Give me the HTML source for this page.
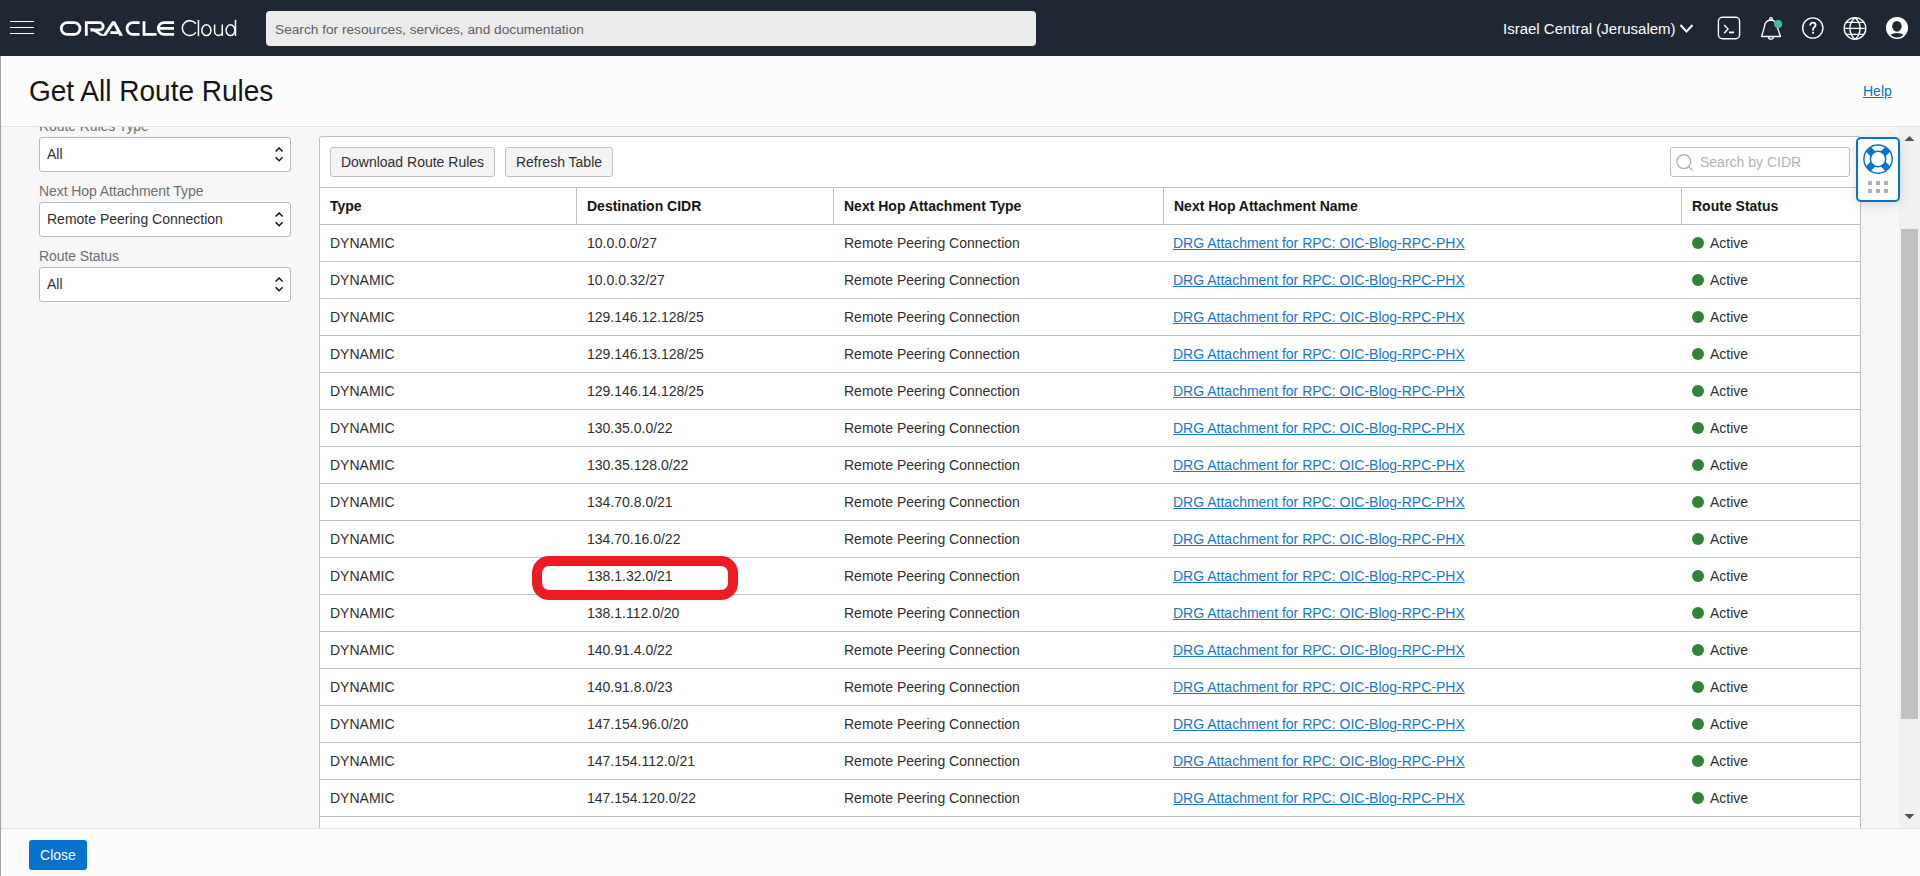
<!DOCTYPE html>
<html><head><meta charset="utf-8">
<style>
*{box-sizing:border-box;margin:0;padding:0}
html,body{width:1920px;height:876px;overflow:hidden}
body{position:relative;background:#f7f7f7;font-family:"Liberation Sans",sans-serif;font-size:14px;color:#161513}
.a{position:absolute;white-space:nowrap}
#hdr{left:0;top:0;width:1920px;height:56px;background:#1e2733}
#search{left:266px;top:11px;width:770px;height:35px;background:#ebebeb;border-radius:4px}
#search span{position:absolute;left:9px;top:10.5px;font-size:13.7px;line-height:16px;color:#5f5f5f}
#region{left:1503px;top:20px;font-size:15px;line-height:17px;color:#fff;transform:scaleY(1.03);transform-origin:0 13.7px}
#titlebar{left:1px;top:56px;width:1919px;height:71px;background:#fcfcfc;border-bottom:1px solid #e4e4e4}
#title{left:29px;top:76px;font-size:28px;line-height:32px;color:#161513;transform:scaleY(1.05);transform-origin:0 25px}
#help{left:1863px;top:83px;font-size:14px;line-height:16px;color:#0572ce;text-decoration:underline}
#leftline{left:0;top:56px;width:1px;height:820px;background:#a3a3a3}
#footer{left:1px;top:828px;width:1919px;height:48px;background:#fbfbfb;border-top:1px solid #e4e4e4}
#close{left:29px;top:840px;width:58px;height:30px;background:#0572ce;border-radius:3px;color:#fff;font-size:14px;text-align:center;line-height:30px}
.lbl{left:39px;font-size:14px;line-height:16px;color:#6f6f6f;letter-spacing:-0.08px}
.sel{left:39px;width:252px;height:35px;background:#fff;border:1px solid #b3bac2;border-radius:3px}
.sel span{position:absolute;left:7px;top:8px;font-size:14px;line-height:16px;color:#2f2f2f}
.sel svg{position:absolute;left:235px;top:9px}
#tablebox{left:319px;top:136px;width:1542px;height:720px;background:#fff;border:1px solid #b9c0c8;border-radius:3px}
.btn{top:147px;height:30px;background:#f4f4f4;border:1px solid #b9c0c8;border-radius:3px;font-size:14px;color:#2f2f2f;line-height:28px;text-align:center}
#cidr{left:1670px;top:147px;width:180px;height:30px;background:#fff;border:1px solid #b9c0c8;border-radius:3px}
#cidr span{position:absolute;left:29px;top:6px;font-size:14px;line-height:16px;color:#b3b3b3}
#cidr svg{position:absolute;left:4.3px;top:4.5px}
.hl{left:320px;width:1540px;height:1px;background:#b9c0c8}
.vl{width:1px;height:37px;top:187px;background:#b9c0c8}
.th{font-weight:bold;line-height:16px}
.td{line-height:16px;color:#2f2f2f}
.lnk{color:#1a76cf;text-decoration:underline}
.dot{width:12px;height:12px;border-radius:50%;background:#33823a}
#sb{left:1899px;top:127px;width:21px;height:701px;background:#f1f1f1}
#thumb{left:1901px;top:229px;width:17px;height:490px;background:#c1c1c1}
#widget{left:1856px;top:137px;width:44px;height:65px;background:#fff;border:2px solid #0572ce;border-radius:5px;box-shadow:0 3px 12px rgba(0,0,0,.13)}
</style></head><body>
<div id="hdr" class="a"></div>
<div class="a" style="left:10px;top:21px;width:24px;height:1px;background:#fff"></div>
<div class="a" style="left:10px;top:27px;width:24px;height:1px;background:#fff"></div>
<div class="a" style="left:10px;top:33px;width:24px;height:1px;background:#fff"></div>
<svg class="a" style="left:55px;top:15px" width="125" height="27" viewBox="0 0 125 27">
<g fill="none" stroke="#fff" stroke-width="2.8">
<path d="M12.2,7.6 H19.1 A5.85,5.85 0 0 1 19.1,19.4 H12.2 A5.85,5.85 0 0 1 12.2,7.6 Z"/>
<path d="M31.3,20.8 V7.6 H44.5 A3.7,3.7 0 0 1 44.5,15 H35.5"/>
</g><g fill="#fff"><path d="M34.2,13.6 H38.3 L50.1,20.8 H45.4 Z"/>
<path d="M47.5,20.8 L57.2,6.2 H60.2 L68,20.8 H64.4 L58.5,9.7 L51.1,20.8 Z"/><path d="M55.3,16.3 H63.2 L64.6,18.9 H55.3 Z"/></g><g fill="none" stroke="#fff" stroke-width="2.8">
<path d="M84.6,7.6 H77.9 A5.85,5.85 0 0 0 77.9,19.4 H84.6"/>
<path d="M89.0,6.2 V19.4 H101.6"/>
<path d="M119.1,7.6 H109.2 A5.85,5.85 0 0 0 109.2,19.4 H119.1 M104.5,13.4 H119"/>
</g></svg>
<svg class="a" style="left:175px;top:12px" width="70" height="32" viewBox="175 12 70 32"><g fill="none" stroke="#fff" stroke-width="1.5">
<path d="M195.84,23.71 A7.47,7.47 0 1 0 195.92,32.38"/><path d="M198.45,19.85 V36.1"/><ellipse cx="206.4" cy="30.2" rx="4.55" ry="5.37"/>
<path d="M214.6,24.4 V31.7 A3.85,3.7 0 0 0 222.3,31.7 M222.3,24.4 V36.1"/><ellipse cx="230.5" cy="30.2" rx="4.4" ry="5.37"/><path d="M235.5,19.85 V36.1"/></g></svg>
<div id="search" class="a"><span>Search for resources, services, and documentation</span></div>
<div id="region" class="a">Israel Central (Jerusalem)</div>
<svg class="a" style="left:1678px;top:22px" width="20" height="14" viewBox="0 0 20 14"><path d="M2.5,3 L8.5,9.5 L14.5,3" fill="none" stroke="#fff" stroke-width="2"/></svg>
<svg class="a" style="left:1716px;top:15px" width="26" height="26" viewBox="0 0 26 26"><g fill="none" stroke="#fff" stroke-width="1.4">
<rect x="2.4" y="2.2" width="21.2" height="21.6" rx="4"/><path d="M8.2,10 L12,14 L8.2,18.2"/></g><rect x="13" y="16.5" width="5" height="1.8" fill="#fff"/></svg>
<svg class="a" style="left:1758px;top:14px" width="28" height="28" viewBox="0 0 28 28"><g fill="none" stroke="#fff" stroke-width="1.3" stroke-linejoin="round">
<circle cx="13" cy="5" r="1.3"/><path d="M6.6,12.3 C6.6,8.5 9.5,6 12.8,6 C16.2,6 19,8.5 19,12.3 L22.5,22.5 H3.6 Z"/>
<path d="M10.6,22.9 A2.4,2.3 0 0 0 15.4,22.9"/></g><circle cx="20.1" cy="10" r="4" fill="#3cc1a0"/></svg>
<svg class="a" style="left:1800px;top:15px" width="26" height="26" viewBox="0 0 26 26"><circle cx="12.8" cy="13" r="10.1" fill="none" stroke="#fff" stroke-width="1.4"/>
<path d="M10.2,10.4 C10.2,8.6 11.4,7.6 12.9,7.6 C14.5,7.6 15.6,8.6 15.6,10 C15.6,12 13,12.4 13,14.6 V15.4" fill="none" stroke="#fff" stroke-width="1.8"/><rect x="12" y="16.8" width="2" height="1.8" fill="#fff"/></svg>
<svg class="a" style="left:1842px;top:15px" width="27" height="27" viewBox="0 0 27 27"><g fill="none" stroke="#fff" stroke-width="1.4">
<circle cx="13" cy="13.45" r="10.8"/><path d="M13,2.65 A14,14 0 0 0 13,24.25 A14,14 0 0 0 13,2.65"/><path d="M2.2,13.4 H23.8 M4,7.4 H22 M4,19.35 H22"/></g></svg>
<svg class="a" style="left:1884px;top:15px" width="26" height="26" viewBox="0 0 26 26"><defs><clipPath id="avc"><circle cx="13" cy="13" r="9.4"/></clipPath></defs>
<circle cx="13" cy="12.9" r="11" fill="#fff"/><ellipse cx="12.9" cy="11.35" rx="4.75" ry="5.3" fill="#1e2733"/>
<circle cx="13" cy="29.3" r="11.3" fill="#1e2733" clip-path="url(#avc)"/></svg>
<div id="leftline" class="a"></div>
<div id="titlebar" class="a"></div>
<div id="title" class="a">Get All Route Rules</div>
<div id="help" class="a">Help</div>
<div class="a lbl" style="top:118px;clip-path:inset(9px 0 0 0)">Route Rules Type</div>
<div class="a lbl" style="top:183px">Next Hop Attachment Type</div>
<div class="a lbl" style="top:248px">Route Status</div>
<div class="a sel" style="top:137px"><span>All</span><svg width="10" height="16" viewBox="0 0 10 16"><path d="M0.6,4.5 L4.1,1 L7.6,4.5 M0.6,10.2 L4.1,13.7 L7.6,10.2" fill="none" stroke="#161513" stroke-width="1.5"/></svg></div>
<div class="a sel" style="top:202px"><span>Remote Peering Connection</span><svg width="10" height="16" viewBox="0 0 10 16"><path d="M0.6,4.5 L4.1,1 L7.6,4.5 M0.6,10.2 L4.1,13.7 L7.6,10.2" fill="none" stroke="#161513" stroke-width="1.5"/></svg></div>
<div class="a sel" style="top:267px"><span>All</span><svg width="10" height="16" viewBox="0 0 10 16"><path d="M0.6,4.5 L4.1,1 L7.6,4.5 M0.6,10.2 L4.1,13.7 L7.6,10.2" fill="none" stroke="#161513" stroke-width="1.5"/></svg></div>
<div id="tablebox" class="a"></div>
<div class="a btn" style="left:330px;width:165px">Download Route Rules</div>
<div class="a btn" style="left:505px;width:108px">Refresh Table</div>
<div id="cidr" class="a"><svg width="20" height="20" viewBox="0 0 20 20"><g fill="none" stroke="#a8a8a8" stroke-width="1.2"><circle cx="8.8" cy="8.6" r="6.9"/><path d="M13.6,13.6 L17.5,17.3"/></g></svg><span>Search by CIDR</span></div>
<div class="a hl" style="top:187px"></div>
<div class="a vl" style="left:576px"></div>
<div class="a vl" style="left:833px"></div>
<div class="a vl" style="left:1163px"></div>
<div class="a vl" style="left:1681px"></div>
<div class="a th" style="left:330px;top:198px">Type</div>
<div class="a th" style="left:587px;top:198px">Destination CIDR</div>
<div class="a th" style="left:844px;top:198px">Next Hop Attachment Type</div>
<div class="a th" style="left:1174px;top:198px">Next Hop Attachment Name</div>
<div class="a th" style="left:1692px;top:198px">Route Status</div>
<div class="a hl" style="top:224px"></div>
<div class="a td" style="left:330px;top:235px">DYNAMIC</div>
<div class="a td" style="left:587px;top:235px">10.0.0.0/27</div>
<div class="a td" style="left:844px;top:235px">Remote Peering Connection</div>
<div class="a td lnk" style="left:1173px;top:235px">DRG Attachment for RPC: OIC-Blog-RPC-PHX</div>
<div class="a dot" style="left:1692px;top:237px"></div>
<div class="a td" style="left:1710px;top:235px">Active</div>
<div class="a hl" style="top:261px"></div>
<div class="a td" style="left:330px;top:272px">DYNAMIC</div>
<div class="a td" style="left:587px;top:272px">10.0.0.32/27</div>
<div class="a td" style="left:844px;top:272px">Remote Peering Connection</div>
<div class="a td lnk" style="left:1173px;top:272px">DRG Attachment for RPC: OIC-Blog-RPC-PHX</div>
<div class="a dot" style="left:1692px;top:274px"></div>
<div class="a td" style="left:1710px;top:272px">Active</div>
<div class="a hl" style="top:298px"></div>
<div class="a td" style="left:330px;top:309px">DYNAMIC</div>
<div class="a td" style="left:587px;top:309px">129.146.12.128/25</div>
<div class="a td" style="left:844px;top:309px">Remote Peering Connection</div>
<div class="a td lnk" style="left:1173px;top:309px">DRG Attachment for RPC: OIC-Blog-RPC-PHX</div>
<div class="a dot" style="left:1692px;top:311px"></div>
<div class="a td" style="left:1710px;top:309px">Active</div>
<div class="a hl" style="top:335px"></div>
<div class="a td" style="left:330px;top:346px">DYNAMIC</div>
<div class="a td" style="left:587px;top:346px">129.146.13.128/25</div>
<div class="a td" style="left:844px;top:346px">Remote Peering Connection</div>
<div class="a td lnk" style="left:1173px;top:346px">DRG Attachment for RPC: OIC-Blog-RPC-PHX</div>
<div class="a dot" style="left:1692px;top:348px"></div>
<div class="a td" style="left:1710px;top:346px">Active</div>
<div class="a hl" style="top:372px"></div>
<div class="a td" style="left:330px;top:383px">DYNAMIC</div>
<div class="a td" style="left:587px;top:383px">129.146.14.128/25</div>
<div class="a td" style="left:844px;top:383px">Remote Peering Connection</div>
<div class="a td lnk" style="left:1173px;top:383px">DRG Attachment for RPC: OIC-Blog-RPC-PHX</div>
<div class="a dot" style="left:1692px;top:385px"></div>
<div class="a td" style="left:1710px;top:383px">Active</div>
<div class="a hl" style="top:409px"></div>
<div class="a td" style="left:330px;top:420px">DYNAMIC</div>
<div class="a td" style="left:587px;top:420px">130.35.0.0/22</div>
<div class="a td" style="left:844px;top:420px">Remote Peering Connection</div>
<div class="a td lnk" style="left:1173px;top:420px">DRG Attachment for RPC: OIC-Blog-RPC-PHX</div>
<div class="a dot" style="left:1692px;top:422px"></div>
<div class="a td" style="left:1710px;top:420px">Active</div>
<div class="a hl" style="top:446px"></div>
<div class="a td" style="left:330px;top:457px">DYNAMIC</div>
<div class="a td" style="left:587px;top:457px">130.35.128.0/22</div>
<div class="a td" style="left:844px;top:457px">Remote Peering Connection</div>
<div class="a td lnk" style="left:1173px;top:457px">DRG Attachment for RPC: OIC-Blog-RPC-PHX</div>
<div class="a dot" style="left:1692px;top:459px"></div>
<div class="a td" style="left:1710px;top:457px">Active</div>
<div class="a hl" style="top:483px"></div>
<div class="a td" style="left:330px;top:494px">DYNAMIC</div>
<div class="a td" style="left:587px;top:494px">134.70.8.0/21</div>
<div class="a td" style="left:844px;top:494px">Remote Peering Connection</div>
<div class="a td lnk" style="left:1173px;top:494px">DRG Attachment for RPC: OIC-Blog-RPC-PHX</div>
<div class="a dot" style="left:1692px;top:496px"></div>
<div class="a td" style="left:1710px;top:494px">Active</div>
<div class="a hl" style="top:520px"></div>
<div class="a td" style="left:330px;top:531px">DYNAMIC</div>
<div class="a td" style="left:587px;top:531px">134.70.16.0/22</div>
<div class="a td" style="left:844px;top:531px">Remote Peering Connection</div>
<div class="a td lnk" style="left:1173px;top:531px">DRG Attachment for RPC: OIC-Blog-RPC-PHX</div>
<div class="a dot" style="left:1692px;top:533px"></div>
<div class="a td" style="left:1710px;top:531px">Active</div>
<div class="a hl" style="top:557px"></div>
<div class="a td" style="left:330px;top:568px">DYNAMIC</div>
<div class="a td" style="left:587px;top:568px">138.1.32.0/21</div>
<div class="a td" style="left:844px;top:568px">Remote Peering Connection</div>
<div class="a td lnk" style="left:1173px;top:568px">DRG Attachment for RPC: OIC-Blog-RPC-PHX</div>
<div class="a dot" style="left:1692px;top:570px"></div>
<div class="a td" style="left:1710px;top:568px">Active</div>
<div class="a hl" style="top:594px"></div>
<div class="a td" style="left:330px;top:605px">DYNAMIC</div>
<div class="a td" style="left:587px;top:605px">138.1.112.0/20</div>
<div class="a td" style="left:844px;top:605px">Remote Peering Connection</div>
<div class="a td lnk" style="left:1173px;top:605px">DRG Attachment for RPC: OIC-Blog-RPC-PHX</div>
<div class="a dot" style="left:1692px;top:607px"></div>
<div class="a td" style="left:1710px;top:605px">Active</div>
<div class="a hl" style="top:631px"></div>
<div class="a td" style="left:330px;top:642px">DYNAMIC</div>
<div class="a td" style="left:587px;top:642px">140.91.4.0/22</div>
<div class="a td" style="left:844px;top:642px">Remote Peering Connection</div>
<div class="a td lnk" style="left:1173px;top:642px">DRG Attachment for RPC: OIC-Blog-RPC-PHX</div>
<div class="a dot" style="left:1692px;top:644px"></div>
<div class="a td" style="left:1710px;top:642px">Active</div>
<div class="a hl" style="top:668px"></div>
<div class="a td" style="left:330px;top:679px">DYNAMIC</div>
<div class="a td" style="left:587px;top:679px">140.91.8.0/23</div>
<div class="a td" style="left:844px;top:679px">Remote Peering Connection</div>
<div class="a td lnk" style="left:1173px;top:679px">DRG Attachment for RPC: OIC-Blog-RPC-PHX</div>
<div class="a dot" style="left:1692px;top:681px"></div>
<div class="a td" style="left:1710px;top:679px">Active</div>
<div class="a hl" style="top:705px"></div>
<div class="a td" style="left:330px;top:716px">DYNAMIC</div>
<div class="a td" style="left:587px;top:716px">147.154.96.0/20</div>
<div class="a td" style="left:844px;top:716px">Remote Peering Connection</div>
<div class="a td lnk" style="left:1173px;top:716px">DRG Attachment for RPC: OIC-Blog-RPC-PHX</div>
<div class="a dot" style="left:1692px;top:718px"></div>
<div class="a td" style="left:1710px;top:716px">Active</div>
<div class="a hl" style="top:742px"></div>
<div class="a td" style="left:330px;top:753px">DYNAMIC</div>
<div class="a td" style="left:587px;top:753px">147.154.112.0/21</div>
<div class="a td" style="left:844px;top:753px">Remote Peering Connection</div>
<div class="a td lnk" style="left:1173px;top:753px">DRG Attachment for RPC: OIC-Blog-RPC-PHX</div>
<div class="a dot" style="left:1692px;top:755px"></div>
<div class="a td" style="left:1710px;top:753px">Active</div>
<div class="a hl" style="top:779px"></div>
<div class="a td" style="left:330px;top:790px">DYNAMIC</div>
<div class="a td" style="left:587px;top:790px">147.154.120.0/22</div>
<div class="a td" style="left:844px;top:790px">Remote Peering Connection</div>
<div class="a td lnk" style="left:1173px;top:790px">DRG Attachment for RPC: OIC-Blog-RPC-PHX</div>
<div class="a dot" style="left:1692px;top:792px"></div>
<div class="a td" style="left:1710px;top:790px">Active</div>
<div class="a hl" style="top:816px"></div>
<div class="a" style="left:532px;top:556px;width:206px;height:44px;border:10px solid #ed1c24;border-radius:17px"></div>
<div id="sb" class="a"></div>
<div id="thumb" class="a"></div>
<svg class="a" style="left:1899px;top:133px" width="21" height="10" viewBox="0 0 21 10"><path d="M5.5,8 L10.5,3 L15.5,8 Z" fill="#505050"/></svg>
<svg class="a" style="left:1899px;top:812px" width="21" height="10" viewBox="0 0 21 10"><path d="M5.5,2 L10.5,7 L15.5,2 Z" fill="#505050"/></svg>
<div id="widget" class="a"><svg width="40" height="61" viewBox="0 0 40 61" style="position:absolute;left:0;top:0">
<circle cx="20.05" cy="20.05" r="14.9" fill="#0572ce"/><circle cx="20.05" cy="20.05" r="13.4" fill="#fff"/>
<g transform="rotate(45 20.05 20.05)" fill="#0572ce"><rect x="6.45" y="16.7" width="27.2" height="6.7"/><rect x="16.7" y="6.45" width="6.7" height="27.2"/></g>
<circle cx="20.05" cy="20.05" r="8.45" fill="#0572ce"/><circle cx="20.05" cy="20.05" r="6.95" fill="#fff"/>
<g fill="#aab1b9"><rect x="10" y="42" width="4" height="4"/><rect x="18" y="42" width="4" height="4"/><rect x="26" y="42" width="4" height="4"/>
<rect x="10" y="50" width="4" height="4"/><rect x="18" y="50" width="4" height="4"/><rect x="26" y="50" width="4" height="4"/></g>
</svg></div>
<div id="footer" class="a"></div>
<div id="close" class="a">Close</div>
</body></html>
